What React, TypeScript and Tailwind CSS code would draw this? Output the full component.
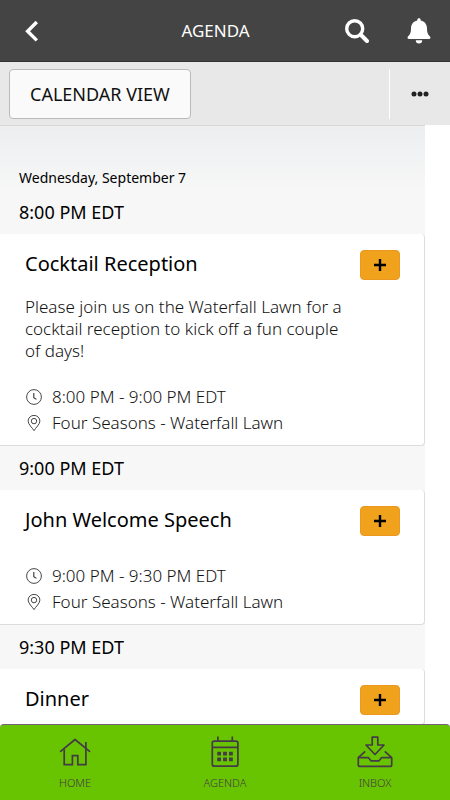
import type { ReactNode } from 'react';

interface Session {
  id: string;
  start: string;
  title: string;
  description?: string;
  time?: string;
  place?: string;
}

const sessions: Session[] = [
  {
    id: 'cocktail',
    start: '8:00 PM EDT',
    title: 'Cocktail Reception',
    description: 'Please join us on the Waterfall Lawn for a cocktail reception to kick off a fun couple of days!',
    time: '8:00 PM - 9:00 PM EDT',
    place: 'Four Seasons - Waterfall Lawn',
  },
  {
    id: 'welcome',
    start: '9:00 PM EDT',
    title: 'John Welcome Speech',
    time: '9:00 PM - 9:30 PM EDT',
    place: 'Four Seasons - Waterfall Lawn',
  },
  { id: 'dinner', start: '9:30 PM EDT', title: 'Dinner' },
];

function ClockIcon() {
  return (
    <svg className="h-4 w-4 shrink-0" viewBox="0 0 16 16" fill="none" stroke="#333" aria-hidden="true">
      <circle cx="8" cy="8" r="7.4" strokeWidth="0.9" />
      <path d="M7.8 4v4.6l2.6 1.8" strokeWidth="1.1" />
    </svg>
  );
}

function PinIcon() {
  return (
    <svg className="h-4 w-4 shrink-0" viewBox="0 0 16 16" fill="none" stroke="#333" strokeWidth="0.9" aria-hidden="true">
      <path d="M8 15.6C6.3 12.8 2.1 9.3 2.1 6.1a5.9 5.7 0 0 1 11.8 0C13.9 9.3 9.7 12.8 8 15.6Z" />
      <circle cx="8" cy="6.1" r="2.7" />
    </svg>
  );
}

function HomeIcon() {
  return (
    <svg className="h-8 w-9" viewBox="0 0 36 32" fill="none" stroke="#443a48" strokeWidth="1.7" aria-hidden="true">
      <path d="M3.6 15.3 18 3.5l14.6 11.8" strokeLinecap="round" strokeLinejoin="round" />
      <path d="M7.2 13.2v15.4h8.2v-9h5.4v9h8.1V6" />
    </svg>
  );
}

function CalendarIcon() {
  return (
    <svg className="h-8 w-9" viewBox="0 0 36 32" fill="none" stroke="#443a48" strokeWidth="1.7" aria-hidden="true">
      <rect x="5.3" y="5.2" width="25.6" height="25" rx="2" />
      <path d="M5.3 11.3h25.6M10.9.6v4.6M25.300.6v4.6" />
      <g fill="#443a48" stroke="none">
        <path d="M10.200 15.800h3.800v3.800h-3.800zM16.100 15.800h3.800v3.800h-3.800zM22 15.800h3.800v3.800H22z" />
        <path d="M10.200 21.500h3.800v3.800h-3.800zM16.100 21.500h3.800v3.800h-3.800zM22 21.500h3.800v3.800H22z" />
      </g>
    </svg>
  );
}

function InboxIcon() {
  return (
    <svg className="h-8 w-9" viewBox="0 0 36 32" fill="none" stroke="#443a48" strokeWidth="1.7" strokeLinejoin="round" aria-hidden="true">
      <path d="M15.200 1.200h5.600v7.800H27l-9 9.500L9 9h6.200Z" />
      <path d="m8.200 15.300-6.900 6.400v7q0 1.700 1.700 1.700h30q1.700 0 1.700-1.700v-7l-6.900-6.400" />
      <path d="M1.300 21.700h10.200l2.400 3.100h8.200l2.400-3.100h10.200" />
    </svg>
  );
}

function SessionBlock({ session }: { session: Session }) {
  const { start, title, description, time, place } = session;

  return (
    <section>
      <h2 className="flex h-11 items-center px-[19px] text-lg font-normal text-black">{start}</h2>
      <article className="rounded-r border-r border-b border-[#dcdcdc] bg-white pt-4 pr-6 pb-[9px] pl-[25px]">
        <div className="flex h-[30px] items-start justify-between">
          <h3 className="text-xl leading-7 font-normal text-black">{title}</h3>
          <button
            type="button"
            aria-label={`Add ${title}`}
            className="flex h-[30px] w-10 items-center justify-center rounded border border-[#ec971f] bg-[#f0a21d]"
          >
            <svg className="h-3 w-3" viewBox="0 0 12 12" stroke="#000" strokeWidth="2.4" aria-hidden="true">
              <path d="M6 0v12M0 6h12" />
            </svg>
          </button>
        </div>
        {description && <p className="mt-4 pr-12 text-[17px] leading-[22px]">{description}</p>}
        {time && (
          <ul className={`text-[17px] ${description ? 'mt-[22px]' : 'mt-[27px]'}`}>
            <li className="flex h-[26px] items-center gap-2.5 pl-px">
              <ClockIcon />
              {time}
            </li>
            <li className="flex h-[26px] items-center gap-2.5 pl-px">
              <PinIcon />
              {place}
            </li>
          </ul>
        )}
      </article>
    </section>
  );
}

function Tab({ label, children }: { label: string; children: ReactNode }) {
  return (
    <a href="#" className="flex flex-1 flex-col items-center pt-[11px] text-[#443a48]">
      {children}
      <span className="mt-[7px] text-[11px] leading-4">{label}</span>
    </a>
  );
}

export default function App() {
  return (
    <div className="flex h-screen flex-col overflow-hidden bg-white font-['Noto_Sans',sans-serif] font-light text-[#111]">
      <header className="flex h-[62px] shrink-0 items-center border-b border-[#333] bg-[#444] pr-[19px] pl-5 text-white">
        <button type="button" aria-label="Back">
          <svg className="h-6 w-6" viewBox="0 0 24 24" fill="none" stroke="#fff" strokeWidth="3.4" aria-hidden="true">
            <path d="m16.800 3-9.200 9.200 9.200 9.200" />
          </svg>
        </button>
        <h1 className="flex-1 pl-[42px] text-center text-[17px] font-normal">AGENDA</h1>
        <div className="flex gap-[38px]">
          <button type="button" aria-label="Search">
            <svg className="h-6 w-6" viewBox="0 0 24 24" fill="none" stroke="#fff" aria-hidden="true">
              <circle cx="9.7" cy="9.7" r="8" strokeWidth="3.4" />
              <path d="m16 16 6 6" strokeWidth="4" strokeLinecap="round" />
            </svg>
          </button>
          <button type="button" aria-label="Notifications">
            <svg className="h-[26px] w-6" viewBox="0 0 24 26" fill="#fff" aria-hidden="true">
              <path d="M12 .3c1 0 1.700.7 1.700 1.600v.6c4 .8 6.300 4 6.300 8 0 4.500 1.300 6.300 3 8 .9 1 .4 2.500-.9 2.500H1.900C.6 21 .1 19.500 1 18.500c1.700-1.700 3-3.500 3-8 0-4 2.300-7.200 6.300-8v-.6C10.300 1 11 .3 12 .3ZM8.800 22.300h6.400a3.200 3.200 0 0 1-6.400 0Z" />
            </svg>
          </button>
        </div>
      </header>

      <div className="flex h-[63px] shrink-0 items-center justify-between bg-[#e8e8e8] pl-[9px]">
        <button type="button" className="h-[50px] rounded border border-[#bbb] bg-[#fafafa] px-5 text-lg font-normal text-[#111]">
          CALENDAR VIEW
        </button>
        <button type="button" aria-label="More options" className="flex h-[50px] w-[61px] items-center justify-center border-l border-white">
          <svg className="h-2 w-5" viewBox="0 0 20 8" fill="#222" aria-hidden="true">
            <circle cx="4" cy="4" r="2.5" />
            <circle cx="10" cy="4" r="2.5" />
            <circle cx="16" cy="4" r="2.5" />
          </svg>
        </button>
      </div>

      <main className="mr-[25px] min-h-0 flex-1 overflow-hidden border-t border-[#d8d8d8] bg-[#f7f7f7]">
        <div className="bg-linear-to-b from-[#eceef0] to-[#f7f7f7] px-[19px] pt-10">
          <p className="text-sm leading-6 font-normal text-black">Wednesday, September 7</p>
        </div>
        {sessions.map((session) => (
          <SessionBlock key={session.id} session={session} />
        ))}
      </main>

      <nav className="flex h-[76px] shrink-0 rounded-t-sm border-t border-[#75627b] bg-[#68c400]">
        <Tab label="HOME">
          <HomeIcon />
        </Tab>
        <Tab label="AGENDA">
          <CalendarIcon />
        </Tab>
        <Tab label="INBOX">
          <InboxIcon />
        </Tab>
      </nav>
    </div>
  );
}
